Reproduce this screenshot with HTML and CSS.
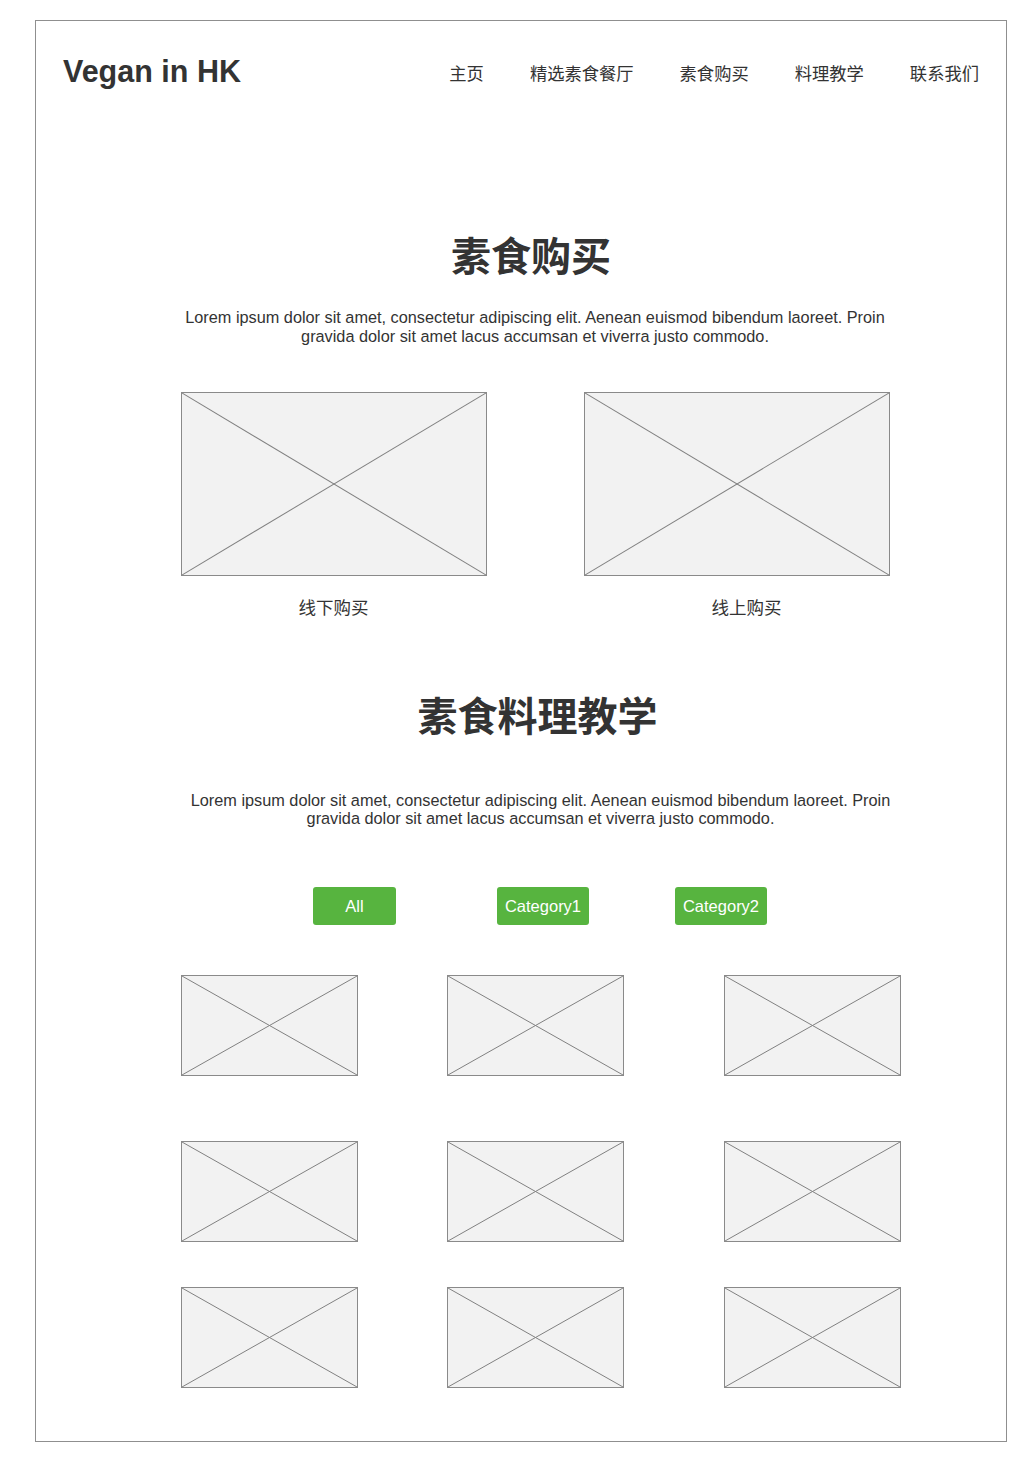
FILE: index.html
```html
<!DOCTYPE html>
<html lang="zh">

<head>
    <meta charset="UTF-8">
    <meta name="viewport" content="width=device-width, initial-scale=1.0">
    <title>Vegan in HK</title>
    <link rel="stylesheet" href="styles.css">
</head>

<body>
    <div class="pagina">
        <header class="topo">
            <div class="logo">Vegan in HK</div>
            <nav class="menu">
                <a href="#">主页</a>
                <a href="#">精选素食餐厅</a>
                <a href="#">素食购买</a>
                <a href="#">料理教学</a>
                <a href="#">联系我们</a>
            </nav>
        </header>

        <section class="secao compras">
            <h1 class="titulo">素食购买</h1>
            <p class="texto">Lorem ipsum dolor sit amet, consectetur adipiscing elit. Aenean euismod bibendum laoreet. Proin gravida dolor sit amet lacus accumsan et viverra justo commodo.</p>
            <div class="lojas">
                <div class="loja">
                    <div class="foto grande">
                        <svg viewBox="0 0 100 100" preserveAspectRatio="none"><line x1="0" y1="0" x2="100" y2="100"/><line x1="100" y1="0" x2="0" y2="100"/></svg>
                    </div>
                    <span class="legenda">线下购买</span>
                </div>
                <div class="loja">
                    <div class="foto grande">
                        <svg viewBox="0 0 100 100" preserveAspectRatio="none"><line x1="0" y1="0" x2="100" y2="100"/><line x1="100" y1="0" x2="0" y2="100"/></svg>
                    </div>
                    <span class="legenda online">线上购买</span>
                </div>
            </div>
        </section>

        <section class="secao receitas">
            <h1 class="titulo">素食料理教学</h1>
            <p class="texto">Lorem ipsum dolor sit amet, consectetur adipiscing elit. Aenean euismod bibendum laoreet. Proin gravida dolor sit amet lacus accumsan et viverra justo commodo.</p>
            <div class="filtros">
                <button class="btn-filtro">All</button>
                <button class="btn-filtro">Category1</button>
                <button class="btn-filtro">Category2</button>
            </div>
            <div class="galeria">
                <div class="foto"><svg viewBox="0 0 100 100" preserveAspectRatio="none"><line x1="0" y1="0" x2="100" y2="100"/><line x1="100" y1="0" x2="0" y2="100"/></svg></div>
                <div class="foto"><svg viewBox="0 0 100 100" preserveAspectRatio="none"><line x1="0" y1="0" x2="100" y2="100"/><line x1="100" y1="0" x2="0" y2="100"/></svg></div>
                <div class="foto"><svg viewBox="0 0 100 100" preserveAspectRatio="none"><line x1="0" y1="0" x2="100" y2="100"/><line x1="100" y1="0" x2="0" y2="100"/></svg></div>
                <div class="foto"><svg viewBox="0 0 100 100" preserveAspectRatio="none"><line x1="0" y1="0" x2="100" y2="100"/><line x1="100" y1="0" x2="0" y2="100"/></svg></div>
                <div class="foto"><svg viewBox="0 0 100 100" preserveAspectRatio="none"><line x1="0" y1="0" x2="100" y2="100"/><line x1="100" y1="0" x2="0" y2="100"/></svg></div>
                <div class="foto"><svg viewBox="0 0 100 100" preserveAspectRatio="none"><line x1="0" y1="0" x2="100" y2="100"/><line x1="100" y1="0" x2="0" y2="100"/></svg></div>
                <div class="foto"><svg viewBox="0 0 100 100" preserveAspectRatio="none"><line x1="0" y1="0" x2="100" y2="100"/><line x1="100" y1="0" x2="0" y2="100"/></svg></div>
                <div class="foto"><svg viewBox="0 0 100 100" preserveAspectRatio="none"><line x1="0" y1="0" x2="100" y2="100"/><line x1="100" y1="0" x2="0" y2="100"/></svg></div>
                <div class="foto"><svg viewBox="0 0 100 100" preserveAspectRatio="none"><line x1="0" y1="0" x2="100" y2="100"/><line x1="100" y1="0" x2="0" y2="100"/></svg></div>
            </div>
        </section>
    </div>
</body>

</html>
```

FILE: styles.css
```css
* {
    margin: 0px;
    padding: 0px;
    box-sizing: border-box;
}

body {
    background-color: #ffffff;
    color: #333333;
    font-family: "Liberation Sans", "Noto Sans CJK SC", sans-serif;
}

div.pagina {
    width: 972px;
    height: 1422px;
    margin: 20px 0 0 35px;
    border: 1px solid #8f8f8f;
    box-shadow: 0 1px 0 #c4c4c4;
}

header.topo {
    height: 104px;
    padding: 0 27px;
    display: flex;
    align-items: center;
    justify-content: space-between;
}

div.logo {
    font-size: 30.5px;
    font-weight: bold;
    color: #333333;
    margin-top: -4px;
}

nav.menu {
    display: flex;
    column-gap: 46px;
    margin-top: -2px;
}

nav.menu a {
    font-family: "Noto Sans CJK SC", sans-serif;
    font-size: 17.3px;
    color: #333333;
    text-decoration: none;
}

section.secao {
    margin-left: 145px;
    display: flex;
    flex-direction: column;
    align-items: center;
}

section.compras {
    width: 708px;
    margin-top: 105px;
}

section.receitas {
    width: 719px;
    margin-top: 72px;
}

h1.titulo {
    font-family: "Noto Sans CJK SC", sans-serif;
    font-size: 40px;
    font-weight: bold;
    line-height: 48px;
    color: #333333;
}

section.compras h1.titulo {
    margin-right: 8px;
}

section.receitas h1.titulo {
    margin-right: 6px;
}

p.texto {
    font-size: 16.3px;
    line-height: 19px;
    text-align: center;
    margin-top: 30px;
}

section.receitas p.texto {
    margin-top: 53px;
    line-height: 18px;
}

div.lojas {
    width: 100%;
    margin-top: 46px;
    display: flex;
    justify-content: space-between;
}

div.loja {
    width: 305px;
    display: flex;
    flex-direction: column;
    align-items: center;
}

span.legenda {
    font-family: "Noto Sans CJK SC", sans-serif;
    font-size: 17.5px;
    line-height: 22px;
    margin-top: 20px;
}

span.online {
    margin-left: 20px;
}

div.foto {
    width: 177px;
    height: 101px;
    border: 1px solid #8a8a8a;
    background-color: #f2f2f2;
}

div.foto.grande {
    width: 306px;
    height: 184px;
}

div.foto svg {
    display: block;
    width: 100%;
    height: 100%;
}

div.foto svg line {
    stroke: #808080;
    stroke-width: 1;
    vector-effect: non-scaling-stroke;
}

div.filtros {
    width: 100%;
    margin-top: 60px;
    padding-left: 132px;
    display: flex;
}

button.btn-filtro {
    height: 38px;
    border: none;
    border-radius: 3px;
    background-color: #57b43f;
    color: #ffffff;
    font-family: "Liberation Sans", sans-serif;
    font-size: 16.5px;
    cursor: pointer;
}

button.btn-filtro:first-child {
    width: 83px;
}

button.btn-filtro:nth-child(2) {
    width: 92px;
    margin-left: 101px;
}

button.btn-filtro:nth-child(3) {
    width: 92px;
    margin-left: 86px;
}

div.galeria {
    width: 100%;
    margin-top: 50px;
    display: grid;
    grid-template-columns: 266px 277px 177px;
    row-gap: 65px;
}

div.galeria div.foto:nth-child(n+7) {
    margin-top: -20px;
}
```
